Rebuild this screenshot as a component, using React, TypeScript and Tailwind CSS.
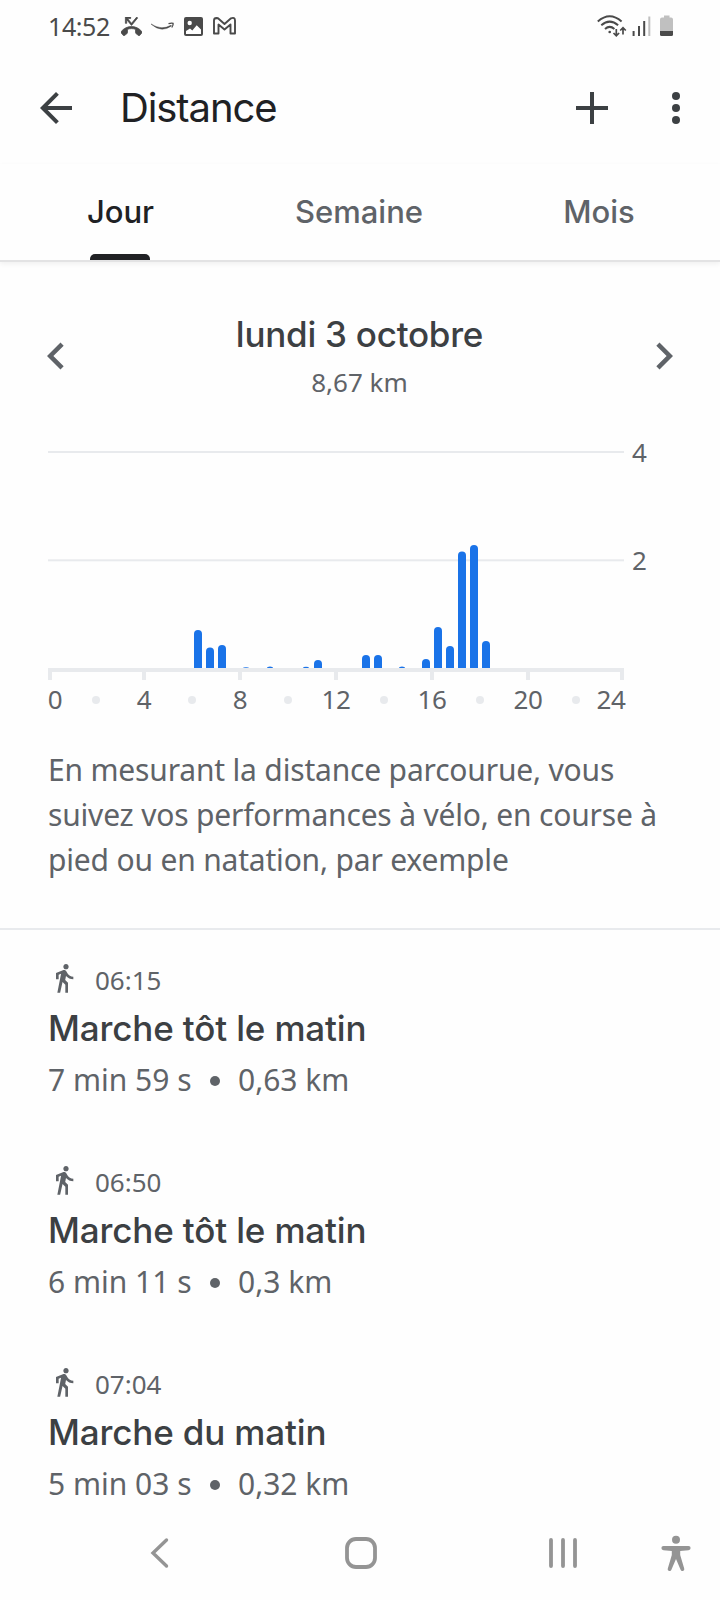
const tabs = ['Jour', 'Semaine', 'Mois'];

// x of the bar centre, y of its top edge; the baseline is at y = 668
const bars = [
  { x: 198, top: 630 },
  { x: 210, top: 647.5 },
  { x: 222, top: 645 },
  { x: 246, top: 667.2 },
  { x: 270, top: 666.4 },
  { x: 306, top: 666.8 },
  { x: 318, top: 660 },
  { x: 366, top: 655 },
  { x: 378, top: 655 },
  { x: 402, top: 666.4 },
  { x: 426, top: 659 },
  { x: 438, top: 627 },
  { x: 450, top: 646 },
  { x: 462, top: 551.5 },
  { x: 474, top: 545 },
  { x: 486, top: 641 },
];

const hours = [
  { label: '0', x: 55, tick: 50 },
  { label: '4', x: 144, tick: 144 },
  { label: '8', x: 240, tick: 240 },
  { label: '12', x: 336, tick: 336 },
  { label: '16', x: 432, tick: 432 },
  { label: '20', x: 528, tick: 528 },
  { label: '24', x: 611, tick: 622 },
];

const activities = [
  { time: '06:15', title: 'Marche tôt le matin', duration: '7 min 59 s', distance: '0,63 km' },
  { time: '06:50', title: 'Marche tôt le matin', duration: '6 min 11 s', distance: '0,3 km' },
  { time: '07:04', title: 'Marche du matin', duration: '5 min 03 s', distance: '0,32 km' },
];

function StatusBar() {
  return (
    <div className="h-[52px] flex items-center pl-[48px]">
      <span className="w-[72px] text-[25px] leading-[50px] font-['Noto_Sans',sans-serif] tracking-[-0.4px] text-[#4a4a4a]">14:52</span>
      {/* Notifications */}
      <svg width="118" height="24" viewBox="120 14 118 24" fill="none">
        <svg x="121" y="17" width="21" height="19" viewBox="0 3 24 18" preserveAspectRatio="none">
          <path
            fill="#4a4a4a"
            stroke="#4a4a4a"
            strokeWidth="0.8"
            d="M6.5 5.5L12 11l7-7-1-1-6 6-4.5-4.5H11V3H5v6h1.5V5.5zm17.21 11.17C20.66 13.78 16.54 12 12 12 7.46 12 3.34 13.78.29 16.67c-.18.18-.29.43-.29.71s.11.53.29.7l2.48 2.48c.18.18.43.29.71.29.27 0 .52-.11.7-.28.79-.73 1.68-1.36 2.66-1.85.33-.16.56-.51.56-.9v-3.1c1.45-.48 3-.73 4.6-.73 1.6 0 3.15.25 4.6.73v3.1c0 .4.23.74.56.9.98.49 1.88 1.11 2.67 1.85.18.17.43.28.7.28.28 0 .53-.11.71-.29l2.48-2.48c.18-.18.29-.43.29-.7s-.12-.52-.3-.71z"
          />
        </svg>
        <path d="M151 24q10.500 6.800 20 1.300l.5.600q-10 7.400-20.500-1.900Z" fill="#4a4a4a" stroke="#4a4a4a" strokeWidth="0.500" />
        <path d="M168.500 23.700q3-1 4.600-.4q.4 1.700-1.300 4.200" stroke="#4a4a4a" strokeWidth="1.300" />
        <rect x="184" y="17" width="19" height="19" rx="2" fill="#4a4a4a" />
        <circle cx="189.700" cy="23" r="2.200" fill="#fff" />
        <path d="M186 34V31l4-2.500 2.300 2 4.400-5.200 4.300 4.300V34z" fill="#fff" />
        <path
          d="M214 33.500V20.500Q214 18 216.500 18L218 18.300L224.500 24L231 18.300Q235 16.800 235 20.500V33.500H230.500V24.500L224.500 29.500L218.500 24.500V33.500Z"
          stroke="#4a4a4a"
          strokeWidth="1.900"
          strokeLinejoin="round"
        />
      </svg>
      {/* Wifi, signal, battery */}
      <svg className="ml-auto mr-[45px]" width="80" height="24" viewBox="595 14 80 24" fill="none">
        <g stroke="#4a4a4a" strokeWidth="2">
          <path d="M597.800 21.500q11.900-10.500 23.800 0" />
          <path d="M601.300 25.300q8.400-7.400 16.800 0" />
          <path d="M605 29q4.700-4.200 9.400 0" />
        </g>
        <circle cx="609.700" cy="32" r="1.300" fill="#4a4a4a" />
        <path d="M616.300 29v7M613.500 33l2.800 2.800 2.800-2.800M623 34.500v-7M620.200 30.500l2.800-2.800 2.800 2.800" stroke="#4a4a4a" strokeWidth="1.700" />
        <path d="M633.600 31v5M639 26v10M644.200 21v15" stroke="#4a4a4a" strokeWidth="2" />
        <path d="M649.300 16.500v19.500" stroke="#c0c0c0" strokeWidth="2" />
        <path d="M664 15.500h5.500v2h1.500a2 2 0 0 1 2 2V31h-13V19.500a2 2 0 0 1 2-2h2z" fill="#c0c0c0" />
        <path d="M660 31h13v3.500a1.500 1.500 0 0 1-1.500 1.500h-10a1.500 1.500 0 0 1-1.500-1.500z" fill="#4a4a4a" />
      </svg>
    </div>
  );
}

function Header() {
  return (
    <header className="h-28 flex items-center pl-8 pr-[20px] text-[#3c4043]">
      <svg width="48" height="48" viewBox="0 0 24 24" fill="currentColor">
        <path d="M20 11H7.830l5.590-5.590L12 4l-8 8 8 8 1.410-1.410L7.830 13H20v-2z" />
      </svg>
      <h1 className="ml-[40px] text-[40px] leading-[48px] tracking-[-1.1px] text-[#202124]">Distance</h1>
      <svg className="ml-auto" width="48" height="48" viewBox="0 0 24 24" fill="currentColor">
        <path d="M20 13h-7v7h-2v-7H4v-2h7V4h2v7h7z" />
      </svg>
      <svg className="ml-[36px]" width="48" height="48" viewBox="0 0 48 48" fill="currentColor">
        <circle cx="24" cy="12" r="4" />
        <circle cx="24" cy="24" r="4" />
        <circle cx="24" cy="36" r="4" />
      </svg>
    </header>
  );
}

function Tabs() {
  return (
    <nav className="h-[98px] grid grid-cols-3 border-b-2 border-[#e3e3e4] shadow-[0_2px_5px_rgba(0,0,0,0.06)]">
      {tabs.map((tab, i) => (
        <button
          key={tab}
          className={
            i === 0
              ? 'flex flex-col items-center text-[31px] leading-[40px] font-medium text-[#202124]'
              : 'flex flex-col items-center text-[31px] leading-[40px] font-medium text-[#5f6368]'
          }
        >
          <span className={i === 0 ? 'mt-[28px] pl-px' : 'mt-[28px] pr-[2px]'}>{tab}</span>
          {i === 0 && <span className="mt-auto w-[60px] h-[6px] rounded-t-[5px] bg-[#202124]" />}
        </button>
      ))}
    </nav>
  );
}

function DayPicker() {
  return (
    <div className="mt-[47px] h-[94px] flex items-start justify-between px-[29px] text-[#5f6368]">
      <svg className="mt-[20px]" width="54" height="54" viewBox="0 0 24 24" fill="currentColor">
        <path d="M15.410 7.410L14 6l-6 6 6 6 1.410-1.410L10.830 12z" />
      </svg>
      <div className="text-center pt-px pr-px">
        <h2 className="text-[35px] leading-[48px] font-medium tracking-[-0.25px] text-[#3c4043]">lundi 3 octobre</h2>
        <p className="mt-[7px] font-['Noto_Sans',sans-serif] text-[26px] leading-[34px]">8,67 km</p>
      </div>
      <svg className="mt-[20px]" width="54" height="54" viewBox="0 0 24 24" fill="currentColor">
        <path d="M10 6L8.590 7.410 13.170 12l-4.580 4.590L10 18l6-6z" />
      </svg>
    </div>
  );
}

function DistanceChart() {
  return (
    <svg className="block" width="720" height="317" viewBox="0 403 720 317">
      <rect x="48" y="451" width="576" height="2" fill="#e8eaed" />
      <rect x="48" y="559.300" width="576" height="2" fill="#e8eaed" />
      {bars.map(({ x, top }) => {
        const h = 668 - top;
        const r = Math.min(4, h);
        const w = h < 4 ? 3 : 4;
        return (
          <path
            key={x}
            fill="#1a73e8"
            d={`M${x - w} 668V${top + r}A${w} ${r} 0 0 1 ${x + w} ${top + r}V668Z`}
          />
        );
      })}
      <rect x="48" y="668" width="576" height="4" fill="#e8eaed" />
      <g fontFamily="'Noto Sans', sans-serif" fontSize="26" letterSpacing="-0.4" fill="#5f6368">
        <text x="632" y="462">4</text>
        <text x="632" y="570">2</text>
        {hours.map(({ label, x }) => (
          <text key={label} x={x} y="709" textAnchor="middle">{label}</text>
        ))}
      </g>
      {hours.map(({ tick }) => (
        <rect key={tick} x={tick - 2} y="672" width="4" height="8" fill="#e8eaed" />
      ))}
      {[96, 192, 288, 384, 480, 576].map((x) => (
        <circle key={x} cx={x} cy="700" r="4" fill="#e8eaed" />
      ))}
    </svg>
  );
}

function ActivityList() {
  return (
    <ul className="text-[#5f6368]">
      {activities.map((a) => (
        <li key={a.time} className="pt-[30px] pb-[27px] pl-12 last:pb-0">
          <div className="h-10 flex items-center font-['Noto_Sans',sans-serif]">
            <svg className="mb-[4px]" width="32" height="32" viewBox="0 0 24 24" fill="currentColor">
              <path d="M13.500 5.500c1.100 0 2-.9 2-2s-.9-2-2-2-2 .9-2 2 .9 2 2 2zM9.800 8.900L7 23h2.100l1.800-8 2.100 2v6h2v-7.500l-2.100-2 .6-3C14.800 12 16.800 13 19 13v-2c-1.900 0-3.500-1-4.300-2.400l-1-1.600c-.4-.6-1-1-1.700-1-.3 0-.5.1-.8.1L6 8.300V13h2V9.600l1.800-.7" />
            </svg>
            <span className="ml-[15px] text-[26px] leading-10">{a.time}</span>
          </div>
          <h3 className="mt-px text-[35px] leading-[54px] font-medium tracking-[-0.15px] text-[#3c4043]">{a.title}</h3>
          <div className="h-[50px] flex items-center font-['Noto_Sans',sans-serif] text-[30px] leading-[50px]">
            <span className="w-[162px]">{a.duration}</span>
            <span className="mt-px w-[10px] h-[10px] rounded-full bg-[#5f6368]" />
            <span className="ml-[18px]">{a.distance}</span>
          </div>
        </li>
      ))}
    </ul>
  );
}

function SystemNav() {
  return (
    <div className="h-[91px] flex items-center pl-[148px] pr-[26px] pb-[3px]">
      <svg width="24" height="36" viewBox="148 1535 24 36" fill="none">
        <path d="M166.500 1540L153 1553l13.500 13" stroke="#949494" strokeWidth="3.400" strokeLinecap="round" />
      </svg>
      <svg className="ml-[171px]" width="36" height="36" viewBox="343 1535 36 36" fill="none">
        <rect x="347" y="1539" width="28" height="28" rx="9" stroke="#949494" strokeWidth="3.800" />
      </svg>
      <svg className="ml-[167px]" width="34" height="36" viewBox="546 1535 34 36">
        <path d="M551 1540v26M563 1540v26M575 1540v26" stroke="#949494" strokeWidth="3.800" strokeLinecap="round" />
      </svg>
      <svg className="ml-auto" width="34" height="38" viewBox="660 1534 34 38" fill="#949494">
        <circle cx="676" cy="1539.700" r="4" />
        <path d="M663.500 1546h25a2 2 0 0 1 0 4.200l-8.300.700V1555l4 13.500a1.900 1.900 0 0 1-3.600 1.300L676 1559l-4.600 10.800a1.900 1.900 0 0 1-3.600-1.300l4-13.500v-4.100l-8.300-.7a2 2 0 0 1 0-4.200z" />
      </svg>
    </div>
  );
}

export default function App() {
  return (
    <div className="w-[720px] h-[1600px] overflow-hidden flex flex-col bg-[#fefefe] font-['Inter',sans-serif]">
      <StatusBar />
      <Header />
      <Tabs />
      <DayPicker />
      <DistanceChart />
      <p className="mt-[27px] ml-[48px] font-['Noto_Sans',sans-serif] text-[30px] leading-[45px] tracking-[-0.18px] text-[#5f6368]">
        En mesurant la distance parcourue, vous
        <br />
        suivez vos performances à vélo, en course à
        <br />
        pied ou en natation, par exemple
      </p>
      <hr className="mt-[46px] border-t-2 border-[#e8eaed]" />
      <ActivityList />
      <SystemNav />
    </div>
  );
}
